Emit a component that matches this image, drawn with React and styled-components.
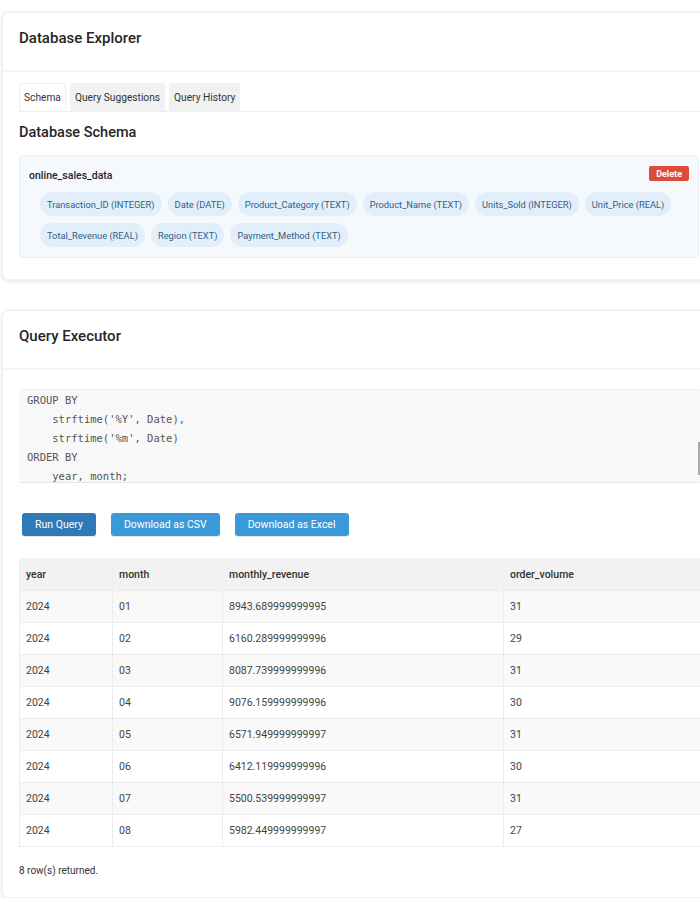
import React from 'react'
import styled, { createGlobalStyle } from 'styled-components'

const GlobalStyle = createGlobalStyle`
  html, body {
    margin: 0;
    padding: 0;
    background: #ffffff;
    overflow: hidden;
  }
  body {
    font-family: Roboto, "Liberation Sans", Arial, sans-serif;
    color: #333;
  }
`

const Page = styled.div`
  padding: 12px 0 0 2px;
  display: flex;
  flex-direction: column;
  gap: 30px;
`

const Card = styled.section`
  width: 712px;
  box-sizing: border-box;
  background: #fff;
  border: 1px solid #f0f0f0;
  border-radius: 6px;
  box-shadow: 0 1px 4px rgba(0, 0, 0, 0.12);
  padding: 15px 0 21px 16px;
`

const CardTitle = styled.h2`
  margin: 0;
  font-size: 15px;
  line-height: 20px;
  font-weight: 500;
  color: #262626;
`

const Divider = styled.hr`
  border: none;
  border-top: 2px solid #f5f5f5;
  margin: 22px 0 11px -16px;
`

const Tabs = styled.div`
  display: flex;
  gap: 4px;
  border-bottom: 1px solid #eee;
  margin-right: -20px;
`

const Tab = styled.div`
  padding: 0 4px;
  height: 27px;
  display: flex;
  align-items: center;
  font-size: 10.2px;
  color: #333;
  background: ${p => (p.$active ? '#fff' : '#f1f1f1')};
  border: 1px solid ${p => (p.$active ? '#f0f0f0' : '#f1f1f1')};
  border-bottom: none;
  border-radius: 3px 3px 0 0;
`

const SectionTitle = styled.h3`
  margin: 12px 0 13px;
  font-size: 14.5px;
  line-height: 18px;
  font-weight: 500;
  color: #262626;
`

const SchemaBox = styled.div`
  width: 680px;
  box-sizing: border-box;
  background: #f6f9fc;
  border: 1px solid #eef1f4;
  border-radius: 4px;
  padding: 10px 9px 10px 9px;
`

const SchemaHead = styled.div`
  display: flex;
  justify-content: space-between;
  align-items: flex-start;
`

const TableName = styled.div`
  font-size: 10.5px;
  font-weight: 500;
  color: #262626;
  margin-top: 3px;
`

const DeleteButton = styled.button`
  border: none;
  background: #e04a3b;
  color: #fff;
  font-family: inherit;
  font-size: 9px;
  font-weight: 700;
  padding: 0 7px;
  height: 15px;
  border-radius: 2px;
`

const Pills = styled.div`
  display: flex;
  flex-wrap: wrap;
  gap: 7px 6px;
  margin: 10px 0 0 11px;
`

const Pill = styled.span`
  display: inline-flex;
  align-items: center;
  height: 24px;
  padding: 0 7px;
  background: #e2effb;
  color: #2f5f88;
  font-size: 9.3px;
  border-radius: 12px;
`

const CodeBox = styled.div`
  position: relative;
  width: 682px;
  height: 94px;
  box-sizing: border-box;
  overflow: hidden;
  background: #f8f8f8;
  border-top: 1px solid #f2f2f2;
  border-bottom: 1px solid #e6e6e6;
  border-radius: 3px;
  margin-top: 19px;
`

const Code = styled.pre`
  margin: 0;
  padding: 1px 8px;
  font-family: "DejaVu Sans Mono", "Liberation Mono", monospace;
  font-size: 10.5px;
  line-height: 19px;
  color: #555;
`

const ScrollThumb = styled.div`
  position: absolute;
  right: 0;
  top: 52px;
  width: 3px;
  height: 33px;
  background: #a9a9a9;
`

const ButtonRow = styled.div`
  display: flex;
  gap: 15px;
  margin: 30px 0 0 3px;
`

const Button = styled.button`
  border: none;
  height: 23px;
  padding: 0 13px;
  border-radius: 3px;
  font-family: inherit;
  font-size: 10.5px;
  color: #fff;
  background: ${p => (p.$primary ? '#2e7ab7' : '#3a9ad9')};
  box-shadow: 0 1px 1px rgba(0, 0, 0, 0.1);
`

const ResultTable = styled.table`
  margin-top: 22px;
  width: 682px;
  table-layout: fixed;
  border-collapse: collapse;
  font-size: 10.5px;
  color: #444;
`

const Th = styled.th`
  text-align: left;
  font-weight: 500;
  color: #333;
  height: 32px;
  padding: 0 6px;
  background: #f2f2f2;
  border: 1px solid #eeeeee;
  border-top: none;
`

const Tr = styled.tr`
  background: ${p => (p.$shade ? '#f9f9f9' : '#fff')};
`

const Td = styled.td`
  height: 31px;
  padding: 0 6px;
  border: 1px solid #ececec;
`

const Footer = styled.div`
  margin-top: 18px;
  font-size: 10px;
  color: #333;
`

const columns = [
  'Transaction_ID (INTEGER)',
  'Date (DATE)',
  'Product_Category (TEXT)',
  'Product_Name (TEXT)',
  'Units_Sold (INTEGER)',
  'Unit_Price (REAL)',
  'Total_Revenue (REAL)',
  'Region (TEXT)',
  'Payment_Method (TEXT)',
]

const rows = [
  ['2024', '01', '8943.689999999995', '31'],
  ['2024', '02', '6160.289999999996', '29'],
  ['2024', '03', '8087.739999999996', '31'],
  ['2024', '04', '9076.159999999996', '30'],
  ['2024', '05', '6571.949999999997', '31'],
  ['2024', '06', '6412.119999999996', '30'],
  ['2024', '07', '5500.539999999997', '31'],
  ['2024', '08', '5982.449999999997', '27'],
]

const sql = `GROUP BY
    strftime('%Y', Date),
    strftime('%m', Date)
ORDER BY
    year, month;`

export default function App() {
  return (
    <>
      <GlobalStyle />
      <Page>
        <Card>
          <CardTitle>Database Explorer</CardTitle>
          <Divider />
          <Tabs>
            <Tab $active>Schema</Tab>
            <Tab>Query Suggestions</Tab>
            <Tab>Query History</Tab>
          </Tabs>
          <SectionTitle>Database Schema</SectionTitle>
          <SchemaBox>
            <SchemaHead>
              <TableName>online_sales_data</TableName>
              <DeleteButton>Delete</DeleteButton>
            </SchemaHead>
            <Pills>
              {columns.map(c => (
                <Pill key={c}>{c}</Pill>
              ))}
            </Pills>
          </SchemaBox>
        </Card>

        <Card>
          <CardTitle>Query Executor</CardTitle>
          <Divider />
          <CodeBox>
            <Code>{sql}</Code>
            <ScrollThumb />
          </CodeBox>
          <ButtonRow>
            <Button $primary>Run Query</Button>
            <Button>Download as CSV</Button>
            <Button>Download as Excel</Button>
          </ButtonRow>
          <ResultTable>
            <colgroup>
              <col style={{ width: 93 }} />
              <col style={{ width: 110 }} />
              <col style={{ width: 281 }} />
              <col />
            </colgroup>
            <thead>
              <tr>
                <Th>year</Th>
                <Th>month</Th>
                <Th>monthly_revenue</Th>
                <Th>order_volume</Th>
              </tr>
            </thead>
            <tbody>
              {rows.map((r, i) => (
                <Tr key={r[1]} $shade={i % 2 === 0}>
                  {r.map((v, j) => (
                    <Td key={j}>{v}</Td>
                  ))}
                </Tr>
              ))}
            </tbody>
          </ResultTable>
          <Footer>8 row(s) returned.</Footer>
        </Card>
      </Page>
    </>
  )
}
